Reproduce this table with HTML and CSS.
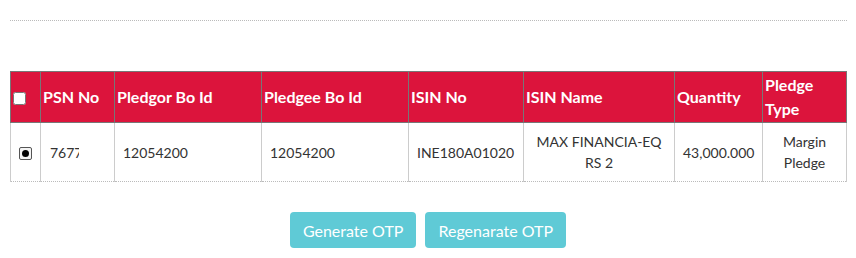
FILE: index.html
```html
<!DOCTYPE html>
<html lang="en">
<head>
    <meta charset="UTF-8">
    <meta name="viewport" content="width=device-width, initial-scale=1.0">
    <title>Pledge Confirmation</title>
    <link rel="stylesheet" href="styles.css">
</head>
<body>
    <div class="page">
        <hr class="divider">

        <table class="pledge-table">
            <colgroup>
                <col class="col-select">
                <col class="col-psn">
                <col class="col-bo">
                <col class="col-bo">
                <col class="col-isin">
                <col class="col-name">
                <col class="col-qty">
                <col class="col-type">
            </colgroup>
            <thead>
                <tr>
                    <th class="select-cell"><input type="checkbox" class="check-all"></th>
                    <th>PSN No</th>
                    <th>Pledgor Bo Id</th>
                    <th>Pledgee Bo Id</th>
                    <th>ISIN No</th>
                    <th>ISIN Name</th>
                    <th>Quantity</th>
                    <th>Pledge Type</th>
                </tr>
            </thead>
            <tbody>
                <tr>
                    <td class="center"><span class="radio checked"></span></td>
                    <td><span class="psn">76771</span></td>
                    <td>12054200</td>
                    <td>12054200</td>
                    <td>INE180A01020</td>
                    <td class="center">MAX FINANCIA-EQ RS 2</td>
                    <td class="center">43,000.000</td>
                    <td class="center">Margin Pledge</td>
                </tr>
            </tbody>
        </table>

        <div class="actions">
            <button class="btn">Generate OTP</button>
            <button class="btn">Regenarate OTP</button>
        </div>
    </div>
</body>
</html>
```

FILE: styles.css
```css
body {
    font-family: 'Lato', sans-serif;
    margin: 0;
    padding: 0;
    background-color: #fff;
    color: #333;
}

.page {
    padding: 0 10px;
}

.divider {
    margin: 20px 0 0 0;
    width: 837px;
    border: none;
    border-top: 1px dotted #bbb;
}

.pledge-table {
    margin-top: 50px;
    width: 836px;
    table-layout: fixed;
    border-collapse: collapse;
    border-bottom: 1px dotted #bbb;
}

.col-select { width: 30px; }
.col-psn { width: 74px; }
.col-bo { width: 147px; }
.col-isin { width: 115px; }
.col-name { width: 151px; }
.col-qty { width: 88px; }
.col-type { width: 84px; }

.pledge-table th {
    background-color: #dc143c; /* crimson header */
    color: #fff;
    font-size: 16px;
    font-weight: bold;
    text-align: left;
    line-height: 24px;
    padding: 1px 2px;
    border: 1px solid #777;
    height: 48px;
}

.pledge-table td {
    font-size: 14px;
    line-height: 21px;
    padding: 8px 8px;
    border: 1px solid #ccc;
    border-bottom: none;
    height: 42px;
}

.pledge-table td.center {
    text-align: center;
}

.select-cell {
    vertical-align: middle;
}

.check-all {
    margin: 0;
    width: 13px;
    height: 13px;
    vertical-align: middle;
}

/* old-style radio: square with a round dot */
.radio {
    display: inline-block;
    width: 11px;
    height: 11px;
    border: 1px solid #555;
    border-radius: 2px;
    background: #f4f4f4;
    position: relative;
    vertical-align: middle;
}

.radio.checked::after {
    content: '';
    position: absolute;
    left: 2px;
    top: 2px;
    width: 7px;
    height: 7px;
    border-radius: 50%;
    background: #000;
}

.psn {
    display: inline-block;
    width: 29px;
    overflow: hidden;
    white-space: nowrap;
    vertical-align: middle;
    margin-left: 1px;
}

.actions {
    display: flex;
    justify-content: center;
    gap: 9px;
    margin-top: 30px;
}

.btn {
    font-family: 'Lato', sans-serif;
    font-size: 16px;
    color: #fff;
    background-color: #5fcad6;
    border: none;
    border-radius: 4px;
    height: 36px;
    padding: 0 13px;
    cursor: pointer;
}
```
